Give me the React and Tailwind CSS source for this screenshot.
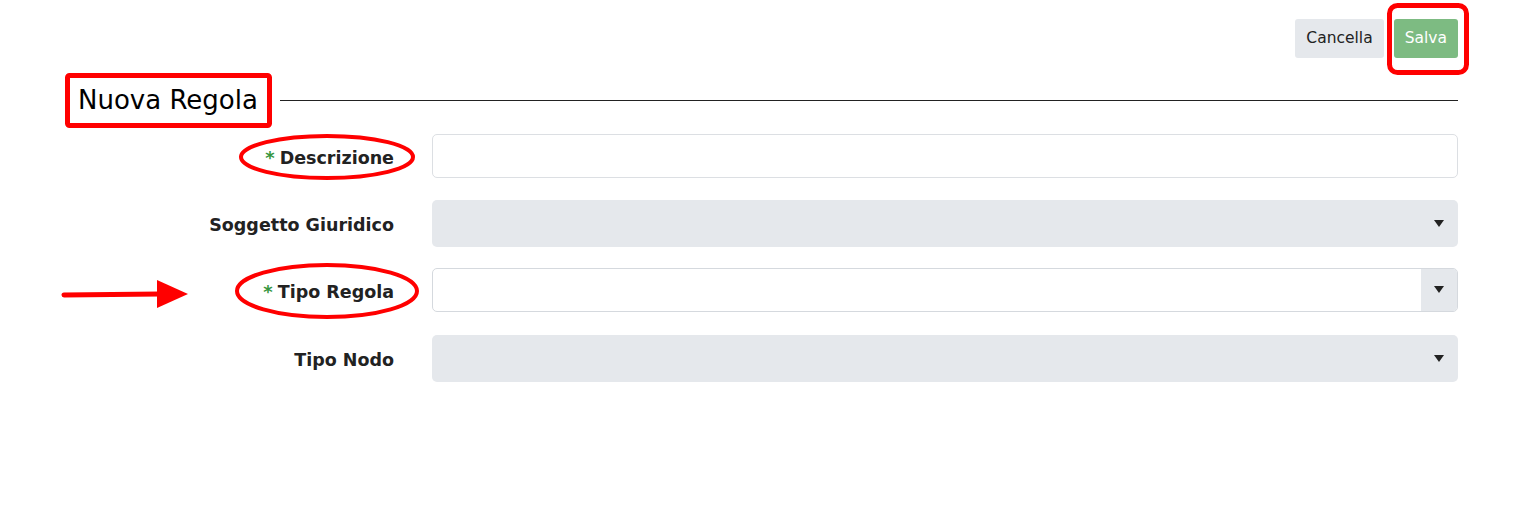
const font = { fontFamily: '"DejaVu Sans", Verdana, sans-serif' }

function Caret() {
  return (
    <svg width="10" height="8" viewBox="0 0 10 8">
      <path d="M0 0 H10 L5 7 Z" fill="#222" />
    </svg>
  )
}

function Label({ required, children }) {
  return (
    <div className="w-[316px] shrink-0 pt-[4px] text-right text-[17.5px] font-bold text-[#222]">
      {required && <span className="mr-[5px] text-[18px] text-[#36963f]">*</span>}
      {children}
    </div>
  )
}

function Row({ label, required, children }) {
  return (
    <div className="flex h-[67px] items-center gap-[38px]">
      <Label required={required}>{label}</Label>
      <div className="flex-1">{children}</div>
    </div>
  )
}

function GraySelect() {
  return (
    <div className="flex h-[47px] items-center justify-end rounded-[5px] bg-[#e5e8ec] pr-[14px]">
      <Caret />
    </div>
  )
}

export default function App() {
  return (
    <div className="relative h-[520px] w-[1538px] bg-white" style={font}>
      <div className="pl-[78px] pr-[80px] pt-[19px]">
        {/* actions */}
        <div className="flex justify-end gap-[10px]">
          <button className="h-[39px] rounded-[3px] bg-[#e5e8ec] px-[11px] text-[15.5px] text-[#222]">
            Cancella
          </button>
          <button className="h-[39px] rounded-[3px] bg-[#7dbb82] px-[11px] text-[15.5px] text-white">
            Salva
          </button>
        </div>

        {/* title */}
        <div className="mt-[27px] flex h-[30px] items-center gap-[22px]">
          <h1 className="text-[26px] leading-[30px] text-black">Nuova Regola</h1>
          <div className="h-px flex-1 bg-[#222]" />
        </div>

        <div className="mt-[7px] flex flex-col">
          <Row label="Descrizione" required>
            <div className="h-[44px] rounded-[5px] border border-[#dcdfe3] bg-white" />
          </Row>
          <div className="mt-[1px]">
            <Row label="Soggetto Giuridico">
              <GraySelect />
            </Row>
          </div>
          <div className="-mt-[1px]">
            <Row label="Tipo Regola" required>
              <div className="flex h-[44px] overflow-hidden rounded-[5px] border border-[#d5d9de] bg-white">
                <div className="flex-1" />
                <div className="flex w-[36px] items-center justify-center bg-[#e5e8ec]">
                  <Caret />
                </div>
              </div>
            </Row>
          </div>
          <div className="mt-[2px]">
            <Row label="Tipo Nodo">
              <GraySelect />
            </Row>
          </div>
        </div>
      </div>

      {/* annotations */}
      <svg className="pointer-events-none absolute left-0 top-0" width="1538" height="520">
        <rect x="67.5" y="75.5" width="202" height="50" rx="2" fill="none" stroke="#f00" strokeWidth="5" />
        <rect x="1389.5" y="5.5" width="77" height="67" rx="8" fill="none" stroke="#f00" strokeWidth="5" />
        <ellipse cx="327" cy="157" rx="86" ry="21" fill="none" stroke="#f00" strokeWidth="4" />
        <ellipse cx="327" cy="291" rx="90" ry="26" fill="none" stroke="#f00" strokeWidth="4" />
        <line x1="64" y1="295" x2="160" y2="294" stroke="#f00" strokeWidth="5" strokeLinecap="round" />
        <path d="M157 280 L188 294 L157 308 Z" fill="#f00" />
      </svg>
    </div>
  )
}
